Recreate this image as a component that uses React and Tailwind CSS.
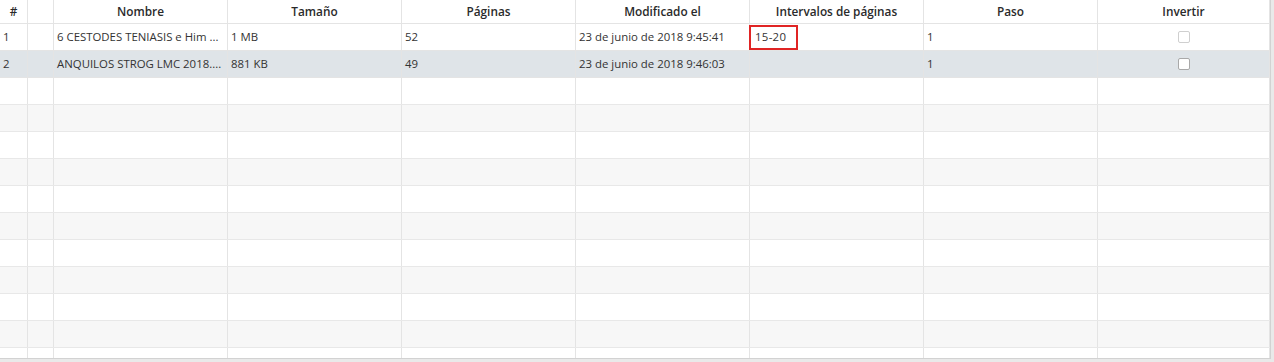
import React from 'react';

const cols = 'grid grid-cols-[28px_26px_174px_174px_174px_174px_174px_174px_172px]';

const headers = ['#', '', 'Nombre', 'Tamaño', 'Páginas', 'Modificado el', 'Intervalos de páginas', 'Paso', 'Invertir'];

const files = [
  { n: '1', name: '6 CESTODES TENIASIS e Him ...', size: '1 MB', pages: '52', date: '23 de junio de 2018 9:45:41', range: '15-20', step: '1' },
  { n: '2', name: 'ANQUILOS STROG LMC 2018....', size: '881 KB', pages: '49', date: '23 de junio de 2018 9:46:03', range: '', step: '1', selected: true },
];

const Checkbox = ({ dark }) => (
  <span className={`block w-[12px] h-[12px] rounded-[2px] border ${dark ? 'border-[#a9a9a9] bg-white' : 'border-[#cfcfcf] bg-white'}`} />
);

const Cell = ({ children, className = '' }) => (
  <div className={`h-full border-r border-[#e4e4e4] flex items-center px-[3px] overflow-hidden whitespace-nowrap ${className}`}>
    {children}
  </div>
);

export default function App() {
  const empty = Array.from({ length: 11 }, (_, i) => i);
  return (
    <div className="w-[1274px] h-[362px] bg-[#e9e9e9] overflow-hidden" style={{ fontFamily: '"Open Sans", "Noto Sans", sans-serif' }}>
      <div className="w-[1271px] h-[359px] bg-white border-r border-b border-[#d2d2d2] overflow-hidden text-[11.4px] text-[#333]">
        <div className={`${cols} h-[24px] border-b border-[#e4e4e4] bg-white`}>
          {headers.map((h, i) => (
            <Cell key={i} className="justify-center font-semibold text-[11.8px] text-[#2a2a2a]">{h}</Cell>
          ))}
        </div>
        {files.map((f) => (
          <div key={f.n} className={`${cols} h-[27px] border-b border-[#e4e4e4] ${f.selected ? 'bg-[#dfe4e8]' : 'bg-white'}`}>
            <Cell>{f.n}</Cell>
            <Cell />
            <Cell>{f.name}</Cell>
            <Cell>{f.size}</Cell>
            <Cell>{f.pages}</Cell>
            <Cell>{f.date}</Cell>
            <Cell className="!px-0 !overflow-visible">
              {f.range ? (
                <div className="-ml-px w-[49px] h-[25px] border-2 border-[#e02424] flex items-center px-[4px] tracking-[0.3px]">{f.range}</div>
              ) : null}
            </Cell>
            <Cell>{f.step}</Cell>
            <Cell className="justify-center">
              <Checkbox dark={f.selected} />
            </Cell>
          </div>
        ))}
        {empty.map((i) => (
          <div key={i} className={`${cols} h-[27px] border-b border-[#e8e8e8] ${i % 2 === 0 ? 'bg-white' : 'bg-[#f7f7f7]'}`}>
            {headers.map((_, j) => (
              <Cell key={j} />
            ))}
          </div>
        ))}
      </div>
    </div>
  );
}
